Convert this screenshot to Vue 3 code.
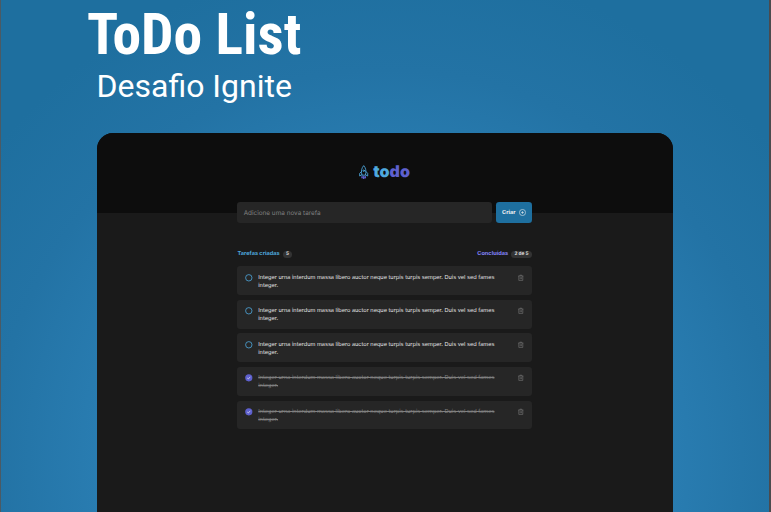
<script setup>
const text = 'Integer urna interdum massa libero auctor neque turpis turpis semper. Duis vel sed fames integer.'
const tasks = [
  { id: 1, text, done: false },
  { id: 2, text, done: false },
  { id: 3, text, done: false },
  { id: 4, text, done: true },
  { id: 5, text, done: true },
]
</script>

<template>
  <main class="cover">
    <h1 class="title"><span>ToDo List</span></h1>
    <p class="subtitle">Desafio Ignite</p>

    <section class="panel">
      <header class="top">
        <svg class="rocket" viewBox="0 0 22 36" fill="none" stroke-width="2.2" stroke-linejoin="round" stroke-linecap="round">
          <path d="M6.500 24C4 15 6 7 11 1.500C16 7 18 15 15.500 24Z" stroke="#4ea8de" />
          <path d="M5.500 16L1.200 20.500V27L6.500 24M16.500 16L20.800 20.500V27L15.500 24" stroke="#4ea8de" />
          <circle cx="11" cy="14" r="1.800" stroke="#4ea8de" />
          <path d="M7 28.500V31M11 28.500V34M15 28.500V31" stroke="#5e60ce" stroke-width="3.600" />
        </svg>
        <span class="brand">to<b>do</b></span>
      </header>

      <div class="content">
        <form class="form" @submit.prevent>
          <div class="field">Adicione uma nova tarefa</div>
          <button class="create">
            Criar
            <svg viewBox="0 0 16 16" fill="none" stroke="#f2f2f2" stroke-width="1.3">
              <circle cx="8" cy="8" r="7" />
              <path d="M8 4.800V11.200M4.800 8H11.200" />
            </svg>
          </button>
        </form>

        <div class="info">
          <div class="created">Tarefas criadas <span class="badge">5</span></div>
          <div class="finished">Concluídas <span class="badge">2 de 5</span></div>
        </div>

        <ul class="list">
          <li v-for="task in tasks" :key="task.id" class="task" :class="{ done: task.done }">
            <svg class="check" viewBox="0 0 24 24" fill="none">
              <template v-if="task.done">
                <circle cx="12" cy="12" r="9" fill="#5e60ce" />
                <path d="M8 12.300L10.800 15L15.800 9.500" stroke="#f2f2f2" stroke-width="1.700" />
              </template>
              <circle v-else cx="12" cy="12" r="8" stroke="#4ea8de" stroke-width="2" />
            </svg>
            <p>{{ task.text }}</p>
            <svg class="trash" viewBox="0 0 24 24" fill="none" stroke="#808080" stroke-width="1.400">
              <path d="M5.500 7.500H18.500M9.500 7V5.500H14.500V7M7 7.500V18.500H17V7.500M10.500 10.500V15.500M13.500 10.500V15.500" />
            </svg>
          </li>
        </ul>
      </div>
    </section>
  </main>
</template>

<style>
body {
  margin: 0;
  overflow: hidden;
}
</style>

<style scoped>
* {
  box-sizing: border-box;
}
.cover {
  height: 512px;
  display: flex;
  flex-direction: column;
  overflow: hidden;
  border-left: 1px solid #4b5a64;
  border-right: 2px solid #4b4b4e;
  background: radial-gradient(circle at 384px 460px, #2d84ba 0, #2a7eb3 270px, #2373a5 390px, #1e6f9f 500px);
  color: #fff;
}
.title {
  flex: none;
  margin: 0 0 0 86px;
  height: 67px;
  font: 700 58px/68px 'Roboto Condensed', Roboto, sans-serif;
}
.title span {
  display: inline-block;
  white-space: nowrap;
  transform: scaleX(0.992);
  transform-origin: left;
}
.subtitle {
  flex: none;
  margin: 0 0 0 95.500px;
  height: 66px;
  font: 400 32px/38px Roboto, sans-serif;
}
.panel {
  flex: none;
  width: 576px;
  height: 400px;
  margin-left: 95.700px;
  border-radius: 16px 16px 0 0;
  overflow: hidden;
  background: #1a1a1a;
  font-family: Inter, sans-serif;
  text-rendering: geometricPrecision;
}
.top {
  height: 80px;
  padding-bottom: 2px;
  display: flex;
  align-items: center;
  justify-content: center;
  gap: 4.500px;
  background: #0d0d0d;
}
.rocket {
  width: 9.400px;
  height: 14.700px;
}
.brand {
  margin-bottom: 2px;
  font-size: 16px;
  font-weight: 900;
  line-height: 20px;
  color: #4ea8de;
}
.brand b {
  font-weight: 900;
  color: #5e60ce;
}
.content {
  width: 294.400px;
  margin: -10.800px auto 0;
}
.form {
  display: flex;
  gap: 3.700px;
}
.field {
  flex: 1;
  height: 21px;
  padding: 0 6.200px;
  border-radius: 3.200px;
  background: #262626;
  color: #808080;
  font-size: 6.400px;
  line-height: 22.600px;
}
.create {
  width: 36px;
  height: 21px;
  display: flex;
  align-items: center;
  justify-content: center;
  gap: 3.200px;
  padding: 0;
  border: 0;
  border-radius: 3.200px;
  background: #1e6f9f;
  color: #f2f2f2;
  font: 700 5.600px/8px Inter, sans-serif;
  text-rendering: inherit;
}
.create svg {
  width: 7px;
  height: 7px;
}
.info {
  margin-top: 27.300px;
  display: flex;
  justify-content: space-between;
  font-size: 5.600px;
  font-weight: 700;
  line-height: 7.800px;
}
.created,
.finished {
  display: flex;
  align-items: center;
  gap: 3.200px;
}
.created {
  color: #4ea8de;
}
.finished {
  color: #8284fa;
}
.badge {
  padding: 0 3.200px;
  border-radius: 8px;
  background: #333;
  color: #d9d9d9;
  font-size: 4.800px;
}
.list {
  list-style: none;
  margin: 8px 0 0;
  padding: 0;
  display: grid;
  gap: 4.800px;
}
.task {
  height: 28.800px;
  padding: 6.400px 6.400px;
  display: flex;
  align-items: flex-start;
  gap: 4.800px;
  border-radius: 3.200px;
  background: #262626;
  color: #e4e4e4;
}
.task p {
  flex: 1;
  margin: 2px 0 0;
  font-size: 5.600px;
  line-height: 7.840px;
}
.task.done p {
  color: #808080;
  text-decoration: line-through;
}
.check,
.trash {
  flex: none;
  width: 9.600px;
  height: 9.600px;
}
</style>
